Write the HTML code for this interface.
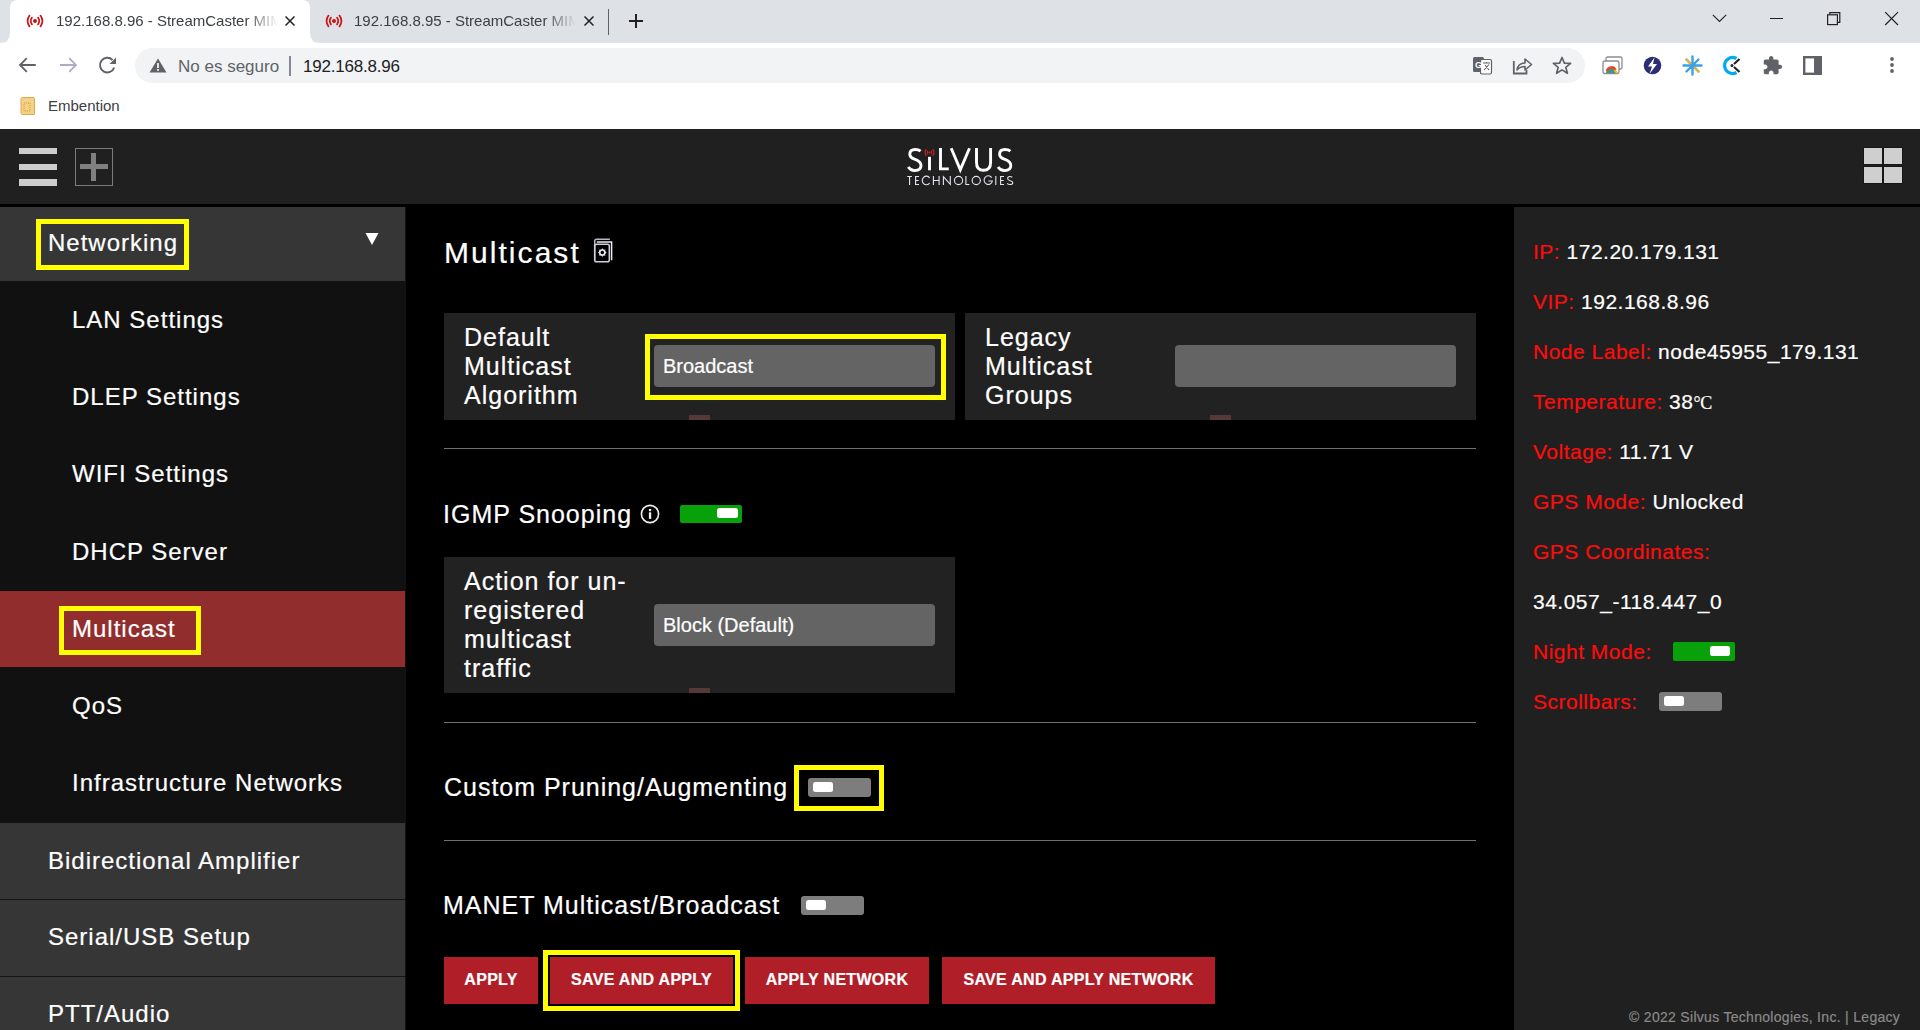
<!DOCTYPE html>
<html><head><meta charset="utf-8">
<style>
*{margin:0;padding:0;box-sizing:border-box}
html,body{width:1920px;height:1030px;overflow:hidden;background:#000;font-family:"Liberation Sans",sans-serif}
.a{position:absolute}
.t{position:absolute;white-space:nowrap;line-height:1}
/* chrome */
#tabs{left:0;top:0;width:1920px;height:43px;background:#dee1e6}
#tb{left:0;top:43px;width:1920px;height:86px;background:#fff}
#omni{left:135px;top:48px;width:1450px;height:35px;border-radius:17.5px;background:#f1f3f4}
/* app */
#hdr{left:0;top:129px;width:1920px;height:75px;background:#202020}
#side{left:0;top:207px;width:406px;height:823px;background:#111}
#rp{left:1514px;top:207px;width:406px;height:823px;background:#202020}
.par{position:absolute;left:0;width:405px;background:#363636}
.st{color:#fff;font-size:24px;letter-spacing:1px}
.panel{position:absolute;background:#222}
.sel{position:absolute;background:#646464;border-radius:4px}
.hr{position:absolute;left:444px;width:1032px;height:1px;background:#707070}
.yb{position:absolute;border:5px solid #ffff00}
.btn{position:absolute;top:957px;height:47px;background:#b01e28;color:#fff;font-weight:bold;font-size:16px;letter-spacing:0.3px;text-align:center;line-height:45px}
.red{color:#ff0c0c}
.rl{position:absolute;left:1533px;font-size:21px;letter-spacing:0.5px;color:#fff;white-space:nowrap;line-height:1}
.tg{position:absolute;width:62px;height:18px;border-radius:2px}
.tg i{position:absolute;top:3px;width:21px;height:10px;border-radius:2.5px;background:#fff}
.lab{color:#fff;font-size:25px;letter-spacing:1.0px;line-height:29px;white-space:nowrap}
.mk{position:absolute;width:21px;height:5px;background:#553838}
.gr{background:#7d7d7d;width:63px!important;height:19px!important;border-radius:3px!important}.gr i{top:4px!important;width:20px!important}
.tabt{font-size:15px;color:#3c4043;-webkit-mask-image:linear-gradient(90deg,#000 190px,transparent 222px)}
.st,.lab,.rl,.btn,.mt{-webkit-text-stroke:0.2px currentColor}
</style></head><body>
<div id="tabs" class="a"></div>
<div id="tb" class="a"></div>
<div id="omni" class="a"></div>

<svg class="a" style="left:0;top:0" width="330" height="43" viewBox="0 0 330 43"><path d="M0 43 Q10 43 10 33 L10 8 Q10 0 18 0 L302 0 Q310 0 310 8 L310 33 Q310 43 320 43 Z" fill="#fff"/></svg>
<svg class="a" style="left:25px;top:14px" width="20" height="14" viewBox="0 0 20 14"><g fill="none" stroke="#cc1414" stroke-width="1.7" stroke-linecap="round"><path d="M4.5 1.6 Q0.6 7 4.5 12.4"/><path d="M15.5 1.6 Q19.4 7 15.5 12.4"/><path d="M7 3.6 Q4.4 7 7 10.4"/><path d="M13 3.6 Q15.6 7 13 10.4"/></g><circle cx="10" cy="7" r="2" fill="#cc1414"/></svg>
<div class="t tabt" style="left:56px;top:13px">192.168.8.96 - StreamCaster MIM</div>
<svg class="a" style="left:284px;top:15px" width="12" height="12" viewBox="0 0 12 12"><path d="M1.5 1.5 L10.5 10.5 M10.5 1.5 L1.5 10.5" stroke="#202124" stroke-width="1.5"/></svg>
<svg class="a" style="left:324px;top:14px" width="20" height="14" viewBox="0 0 20 14"><g fill="none" stroke="#cc1414" stroke-width="1.7" stroke-linecap="round"><path d="M4.5 1.6 Q0.6 7 4.5 12.4"/><path d="M15.5 1.6 Q19.4 7 15.5 12.4"/><path d="M7 3.6 Q4.4 7 7 10.4"/><path d="M13 3.6 Q15.6 7 13 10.4"/></g><circle cx="10" cy="7" r="2" fill="#cc1414"/></svg>
<div class="t tabt" style="left:354px;top:13px;-webkit-mask-image:linear-gradient(90deg,#000 190px,transparent 222px)">192.168.8.95 - StreamCaster MIM</div>
<svg class="a" style="left:583px;top:15px" width="12" height="12" viewBox="0 0 12 12"><path d="M1.5 1.5 L10.5 10.5 M10.5 1.5 L1.5 10.5" stroke="#202124" stroke-width="1.5"/></svg>
<div class="a" style="left:608px;top:9px;width:1px;height:26px;background:#5f6368"></div>
<svg class="a" style="left:628px;top:13px" width="16" height="16" viewBox="0 0 16 16"><path d="M8 1 V15 M1 8 H15" stroke="#202124" stroke-width="2"/></svg>
<svg class="a" style="left:1711px;top:12px" width="17" height="12" viewBox="0 0 17 12"><path d="M1.8 2.8 L8.5 9.5 L15.2 2.8" fill="none" stroke="#202124" stroke-width="1.1"/></svg>
<div class="a" style="left:1770px;top:17.7px;width:13px;height:1.3px;background:#202124"></div>
<svg class="a" style="left:1825px;top:10px" width="18" height="17" viewBox="0 0 18 17"><g fill="none" stroke="#202124" stroke-width="1.2"><rect x="2.6" y="4.8" width="9.8" height="9.8"/><path d="M4.8 4.8 V2.6 H14.8 V12.4 H12.4"/></g></svg>
<svg class="a" style="left:1884px;top:10.5px" width="16" height="16" viewBox="0 0 16 16"><path d="M1.2 1.2 L14 14 M14 1.2 L1.2 14" stroke="#202124" stroke-width="1.2"/></svg>
<svg class="a" style="left:17px;top:55px" width="22" height="20" viewBox="0 0 22 20"><path d="M18.8 10 H3.5 M9.8 3.2 L3 10 L9.8 16.8" fill="none" stroke="#5f6368" stroke-width="1.8"/></svg>
<svg class="a" style="left:57px;top:55px" width="22" height="20" viewBox="0 0 22 20"><path d="M3 10 H18.5 M12.2 3.2 L19 10 L12.2 16.8" fill="none" stroke="#aeacc4" stroke-width="1.8"/></svg>
<svg class="a" style="left:97px;top:55px" width="22" height="20" viewBox="0 0 22 20"><path d="M17.2 12.5 A7.3 7.3 0 1 1 15.5 5" fill="none" stroke="#5f6368" stroke-width="2"/><path d="M19 2.5 V9 H12.5 Z" fill="#5f6368"/></svg>
<svg class="a" style="left:149px;top:58px" width="18" height="15" viewBox="0 0 18 15"><path d="M9 0.5 L17.5 14.5 H0.5 Z" fill="#5f6368"/><rect x="8.1" y="5" width="1.8" height="5" fill="#f1f3f4"/><rect x="8.1" y="11" width="1.8" height="1.8" fill="#f1f3f4"/></svg>
<div class="t" style="left:178px;top:58px;font-size:17px;color:#5f6368">No es seguro</div>
<div class="a" style="left:289px;top:56px;width:2px;height:20px;background:#8a879c"></div>
<div class="t" style="left:303px;top:58px;font-size:17px;color:#202124;letter-spacing:-0.2px">192.168.8.96</div>
<svg class="a" style="left:1472px;top:56px" width="21" height="19" viewBox="0 0 21 19"><rect x="1" y="1" width="11" height="15" rx="1.5" fill="#5f6368"/><rect x="8.5" y="3.5" width="11" height="14.5" rx="1.5" fill="#fff" stroke="#5f6368" stroke-width="1.2"/><path d="M8.5 16 V18" stroke="#5f6368"/><text x="3" y="12" font-size="9" font-weight="bold" fill="#fff" font-family="Liberation Sans">G</text><path d="M11 7 H18 M14.5 6 V7.5 M12 14 L17 8.5 M13 9 L17 14" stroke="#5f6368" stroke-width="1.1" fill="none"/></svg>
<svg class="a" style="left:1512px;top:56px" width="21" height="19" viewBox="0 0 21 19"><path d="M1.8 5 V17.5 H14.5 V14" fill="none" stroke="#5f6368" stroke-width="1.8"/><path d="M5 14 Q6 7 13 7 V3 L19.5 8.5 L13 14 V10.5 Q8 10.5 5 14 Z" fill="none" stroke="#5f6368" stroke-width="1.6" stroke-linejoin="round"/></svg>
<svg class="a" style="left:1552px;top:56px" width="20" height="19" viewBox="0 0 20 19"><path d="M10 1.5 L12.4 7.2 L18.6 7.4 L13.8 11.3 L15.4 17.3 L10 13.9 L4.6 17.3 L6.2 11.3 L1.4 7.4 L7.6 7.2 Z" fill="none" stroke="#5f6368" stroke-width="1.7" stroke-linejoin="round"/></svg>
<svg class="a" style="left:1602px;top:56px" width="21" height="19" viewBox="0 0 21 19"><rect x="4" y="1" width="16" height="12" rx="1.5" fill="#fff" stroke="#8a8d91" stroke-width="1.3"/><rect x="1" y="5" width="16" height="12.5" rx="1.5" fill="#fff" stroke="#8a8d91" stroke-width="1.3"/><path d="M4 17 A5 5 0 0 1 14 17" fill="#34a853"/><path d="M5 15 A4.5 4.5 0 0 1 13.5 14" stroke="#ea4335" stroke-width="2.5" fill="none"/><circle cx="9.5" cy="16" r="1.8" fill="#4285f4"/><path d="M12.5 14 L15 17" stroke="#fbbc05" stroke-width="2"/></svg>
<svg class="a" style="left:1643px;top:56px" width="19" height="19" viewBox="0 0 19 19"><circle cx="9.5" cy="9.5" r="8.8" fill="#2b2f72"/><path d="M11.5 1.5 L5 10.5 H9 L6.5 18 L14 8 H10 Z" fill="#fff"/></svg>
<svg class="a" style="left:1682px;top:55px" width="21" height="21" viewBox="0 0 21 21"><g stroke="#3aa0e8" stroke-width="2.4" stroke-linecap="round"><path d="M10.5 1.5 V19.5 M1.5 10.5 H19.5 M4.5 4.5 L16.5 16.5 M16.5 4.5 L4.5 16.5"/></g><path d="M4.5 4.5 L16.5 16.5" stroke="#e2b431" stroke-width="2.4" stroke-linecap="round"/><circle cx="10.5" cy="10.5" r="2.3" fill="#3aa0e8"/></svg>
<svg class="a" style="left:1722px;top:55px" width="21" height="21" viewBox="0 0 21 21"><path d="M14.5 3.5 A8 8 0 1 0 14.5 17.5" fill="none" stroke="#03a9f4" stroke-width="3.2"/><path d="M12 9 L17.5 4 M12 12 L17.5 17" stroke="#222" stroke-width="2.2"/><circle cx="10" cy="10.5" r="1.5" fill="#222"/></svg>
<svg class="a" style="left:1762px;top:55px" width="21" height="21" viewBox="0 0 24 24"><path d="M20.5 11H19V7c0-1.1-.9-2-2-2h-4V3.5C13 2.12 11.88 1 10.5 1S8 2.12 8 3.5V5H4c-1.1 0-1.99.9-1.99 2v3.8H3.5c1.49 0 2.7 1.21 2.7 2.7s-1.21 2.7-2.7 2.7H2V20c0 1.1.9 2 2 2h3.8v-1.5c0-1.49 1.21-2.7 2.7-2.7 1.49 0 2.7 1.21 2.7 2.7V22H17c1.1 0 2-.9 2-2v-4h1.5c1.38 0 2.5-1.12 2.5-2.5S21.88 11 20.5 11z" fill="#5f6368" transform="translate(0,0)"/></svg>
<svg class="a" style="left:1803px;top:56px" width="19" height="19" viewBox="0 0 19 19"><rect x="1.2" y="1.2" width="16.6" height="16.6" fill="none" stroke="#5f6368" stroke-width="2.4"/><rect x="11" y="1" width="7" height="17" fill="#5f6368"/></svg>
<svg class="a" style="left:1888px;top:56px" width="8" height="18" viewBox="0 0 8 18"><circle cx="4" cy="3" r="1.9" fill="#5f6368"/><circle cx="4" cy="9" r="1.9" fill="#5f6368"/><circle cx="4" cy="15" r="1.9" fill="#5f6368"/></svg>
<svg class="a" style="left:20px;top:97px" width="16" height="18" viewBox="0 0 16 18"><path d="M1 2 Q1 0.5 2.5 0.5 H13 Q14.5 0.5 14.5 2 V17 Q14.5 17.5 14 17.5 H2.5 Q1 17.5 1 16 Z" fill="#f4d08a" stroke="#e0a94a" stroke-width="1"/><rect x="4" y="6" width="6" height="8" fill="none" stroke="#d4a017" stroke-width="1" stroke-dasharray="1 1"/></svg>
<div class="t" style="left:48px;top:98px;font-size:15px;color:#3c4043">Embention</div>


<div id="hdr" class="a"></div>

<div class="a" style="left:19px;top:148px;width:38px;height:6px;background:#cdcdcd"></div>
<div class="a" style="left:19px;top:164px;width:38px;height:6px;background:#cdcdcd"></div>
<div class="a" style="left:19px;top:179px;width:38px;height:7px;background:#cdcdcd"></div>
<div class="a" style="left:75px;top:148px;width:38px;height:38px;border:1px solid #7c7c7c"></div>
<div class="a" style="left:91px;top:153px;width:5px;height:28px;background:#808080"></div>
<div class="a" style="left:80px;top:164px;width:28px;height:5px;background:#808080"></div>
<svg class="a" style="left:900px;top:140px" width="120" height="50" viewBox="0 0 120 50">
<g fill="none" stroke="#fff" stroke-width="2.9">
<path d="M20.6 11.2 Q18.5 9.5 15.2 9.5 Q9.8 9.5 9.8 14.2 Q9.8 17.4 14.6 19.2 Q21 21.4 21 25.6 Q21 30.6 14.8 30.6 Q10.6 30.6 8.2 27"/>
<path d="M29.5 16.8 V30.3"/>
<path d="M40.5 8 V28.9 H48.8"/>
<path d="M51.2 8.2 L60.3 29.7 L69.5 8.2"/>
<path d="M76.5 8 V22.5 Q76.5 30.3 83.5 30.3 Q90.6 30.3 90.6 22.5 V8"/>
<path d="M110.4 11.2 Q108.3 9.5 105 9.5 Q99.6 9.5 99.6 14.2 Q99.6 17.4 104.4 19.2 Q110.8 21.4 110.8 25.6 Q110.8 30.6 104.6 30.6 Q100.4 30.6 98 27"/>
</g>
<g fill="none" stroke="#d02424" stroke-width="1.1"><path d="M26.3 9.2 Q23.8 12.5 26.3 15.8"/><path d="M32.7 9.2 Q35.2 12.5 32.7 15.8"/><path d="M27.9 10.6 Q26.6 12.5 27.9 14.4"/><path d="M31.1 10.6 Q32.4 12.5 31.1 14.4"/></g><circle cx="29.5" cy="12.5" r="1" fill="#d02424"/>
<g fill="none" stroke="#e6e4ee" stroke-width="1.1">
<path d="M7.2 36.5 H11.9 M9.55 36.5 V45"/>
<path d="M19 36.5 H15.6 V44.45 H19 M15.6 40.5 H18.6"/>
<path d="M29.6 37.8 A4.1 4.3 0 1 0 29.6 43.1"/>
<path d="M33.4 36 V45 M39.1 36 V45 M33.4 40.5 H39.1"/>
<path d="M43.4 45 V36.6 L50.3 44.4 V36"/>
<circle cx="58.55" cy="40.5" r="4.1"/>
<path d="M65.9 36 V44.45 H69.4"/>
<circle cx="76.25" cy="40.5" r="4.1"/>
<path d="M91.7 37.6 A4.2 4.3 0 1 0 92.4 41 H88.4"/>
<path d="M95.8 36 V45"/>
<path d="M104 36.5 H100.6 V44.45 H104 M100.6 40.5 H103.7"/>
<path d="M112.3 37.3 Q111.2 36.5 109.9 36.5 Q107.6 36.5 107.6 38.6 Q107.6 40 110.2 40.7 Q112.8 41.4 112.8 42.7 Q112.8 44.5 110 44.5 Q108.2 44.5 107.2 43.3"/>
</g>
</svg>
<div class="a" style="left:1864px;top:148px;width:18px;height:16px;background:#cfcfcf;box-shadow:0 0 0 0.6px #111"></div>
<div class="a" style="left:1884px;top:148px;width:18px;height:16px;background:#cfcfcf;box-shadow:0 0 0 0.6px #111"></div>
<div class="a" style="left:1864px;top:167px;width:18px;height:16px;background:#cfcfcf;box-shadow:0 0 0 0.6px #111"></div>
<div class="a" style="left:1884px;top:167px;width:18px;height:16px;background:#cfcfcf;box-shadow:0 0 0 0.6px #111"></div>
<div id="side" class="a"></div>
<div id="rp" class="a"></div>

<div class="par" style="top:207px;height:74px"></div>
<div class="a" style="left:0;top:591px;width:405px;height:76px;background:#922d2d"></div>
<div class="par" style="top:823px;height:76px"></div>
<div class="a" style="left:0;top:899px;width:405px;height:1px;background:#141414"></div>
<div class="par" style="top:900px;height:76px"></div>
<div class="a" style="left:0;top:976px;width:405px;height:1px;background:#141414"></div>
<div class="par" style="top:977px;height:53px"></div>
<div class="t st" style="left:48px;top:231px">Networking</div>
<svg class="a" style="left:365px;top:231.5px" width="14" height="14" viewBox="0 0 14 14"><path d="M0.5 1 L13.5 1 L7 13 Z" fill="#fff"/></svg>
<div class="yb" style="left:36px;top:219px;width:153px;height:51px"></div>
<div class="t st" style="left:72px;top:308px">LAN Settings</div>
<div class="t st" style="left:72px;top:385px">DLEP Settings</div>
<div class="t st" style="left:72px;top:462px">WIFI Settings</div>
<div class="t st" style="left:72px;top:540px">DHCP Server</div>
<div class="t st" style="left:72px;top:617px">Multicast</div>
<div class="yb" style="left:59px;top:606px;width:142px;height:49px"></div>
<div class="t st" style="left:72px;top:694px">QoS</div>
<div class="t st" style="left:72px;top:771px">Infrastructure Networks</div>
<div class="t st" style="left:48px;top:849px">Bidirectional Amplifier</div>
<div class="t st" style="left:48px;top:925px">Serial/USB Setup</div>
<div class="t st" style="left:48px;top:1002px">PTT/Audio</div>

<div class="t mt" style="left:444px;top:238px;font-size:30px;letter-spacing:2.05px;color:#fff">Multicast</div>
<svg class="a" style="left:593px;top:238px" width="21" height="25" viewBox="0 0 21 25"><g fill="none" stroke-width="1.5"><path d="M1.7 22 V3.3 Q1.7 1.3 3.7 1.3 H16.8" stroke="#b8b8c4"/><path d="M3.8 3.9 H18.6 V22.3" stroke="#ececf2"/><rect x="1.7" y="6.2" width="14.6" height="17.6" rx="1.8" stroke="#d0d0da"/><circle cx="9.3" cy="14.6" r="2.6" stroke="#e6e6ee" stroke-width="1.7"/></g><g fill="#e6e6ee"><path d="M9.3 10.1 L10.3 11.9 L8.3 11.9 Z M9.3 19.1 L10.3 17.3 L8.3 17.3 Z M4.8 14.6 L6.6 13.6 L6.6 15.6 Z M13.8 14.6 L12 13.6 L12 15.6 Z M6.1 11.4 L7.9 12.1 L6.8 13.2 Z M12.5 11.4 L10.7 12.1 L11.8 13.2 Z M6.1 17.8 L7.9 17.1 L6.8 16 Z M12.5 17.8 L10.7 17.1 L11.8 16 Z"/></g></svg>
<div class="panel" style="left:444px;top:313px;width:511px;height:107px"></div>
<div class="panel" style="left:965px;top:313px;width:511px;height:107px"></div>
<div class="a lab" style="left:464px;top:323px">Default<br>Multicast<br>Algorithm</div>
<div class="a lab" style="left:985px;top:323px">Legacy<br>Multicast<br>Groups</div>
<div class="sel" style="left:654px;top:345px;width:281px;height:42px"></div>
<div class="t mt" style="left:663px;top:356px;font-size:20px;color:#fff">Broadcast</div>
<div class="yb" style="left:645px;top:334px;width:301px;height:66px"></div>
<div class="sel" style="left:1175px;top:345px;width:281px;height:42px"></div>
<div class="mk" style="left:689px;top:415px"></div>
<div class="mk" style="left:1210px;top:415px"></div>
<div class="hr" style="top:448px"></div>
<div class="t mt" style="left:443px;top:502px;font-size:25px;letter-spacing:1.0px;color:#fff">IGMP Snooping</div>
<svg class="a" style="left:640px;top:504px" width="20" height="20" viewBox="0 0 20 20"><circle cx="10" cy="10" r="8.6" fill="none" stroke="#f0f0f0" stroke-width="1.6"/><rect x="8.9" y="8.3" width="2.3" height="6.6" fill="#f0f0f0"/><rect x="8.9" y="5" width="2.3" height="2.2" fill="#f0f0f0"/></svg>
<div class="tg" style="left:680px;top:505px;background:#09a109"><i style="left:37px"></i></div>
<div class="panel" style="left:444px;top:557px;width:511px;height:136px"></div>
<div class="a lab" style="left:464px;top:567px">Action for un-<br>registered<br>multicast<br>traffic</div>
<div class="sel" style="left:654px;top:604px;width:281px;height:42px"></div>
<div class="t mt" style="left:663px;top:615px;font-size:20px;color:#fff">Block (Default)</div>
<div class="mk" style="left:689px;top:688px"></div>
<div class="hr" style="top:722px"></div>
<div class="t mt" style="left:444px;top:775px;font-size:25px;letter-spacing:0.98px;color:#fff">Custom Pruning/Augmenting</div>
<div class="tg gr" style="left:808px;top:778px"><i style="left:5px"></i></div>
<div class="yb" style="left:794px;top:765px;width:90px;height:46px"></div>
<div class="hr" style="top:840px"></div>
<div class="t mt" style="left:443px;top:893px;font-size:25px;letter-spacing:1.0px;color:#fff">MANET Multicast/Broadcast</div>
<div class="tg gr" style="left:801px;top:896px"><i style="left:5px"></i></div>
<div class="btn" style="left:444px;width:94px">APPLY</div>
<div class="btn" style="left:550px;width:183px">SAVE AND APPLY</div>
<div class="yb" style="left:543px;top:950px;width:197px;height:61px"></div>
<div class="btn" style="left:745px;width:184px">APPLY NETWORK</div>
<div class="btn" style="left:942px;width:273px">SAVE AND APPLY NETWORK</div>

<div class="rl" style="top:241px"><span class="red">IP:</span> 172.20.179.131</div>
<div class="rl" style="top:291px"><span class="red">VIP:</span> 192.168.8.96</div>
<div class="rl" style="top:341px"><span class="red">Node Label:</span> node45955_179.131</div>
<div class="rl" style="top:391px"><span class="red">Temperature:</span> 38<span style="font-family:'Liberation Serif',serif;font-size:18px;letter-spacing:-0.5px">&deg;C</span></div>
<div class="rl" style="top:441px"><span class="red">Voltage:</span> 11.71 V</div>
<div class="rl" style="top:491px"><span class="red">GPS Mode:</span> Unlocked</div>
<div class="rl" style="top:541px"><span class="red">GPS Coordinates:</span></div>
<div class="rl" style="top:591px">34.057_-118.447_0</div>
<div class="rl" style="top:641px"><span class="red">Night Mode:</span></div>
<div class="tg" style="left:1673px;top:642px;height:19px;background:#09a109"><i style="left:37px;top:4px;width:20px"></i></div>
<div class="rl" style="top:691px"><span class="red">Scrollbars:</span></div>
<div class="tg gr" style="left:1659px;top:692px"><i style="left:5px"></i></div>
<div class="t mt" style="left:1629px;top:1010px;font-size:14px;letter-spacing:0.3px;color:#8a8a8a">&copy; 2022 Silvus Technologies, Inc. | Legacy</div>


</body></html>
